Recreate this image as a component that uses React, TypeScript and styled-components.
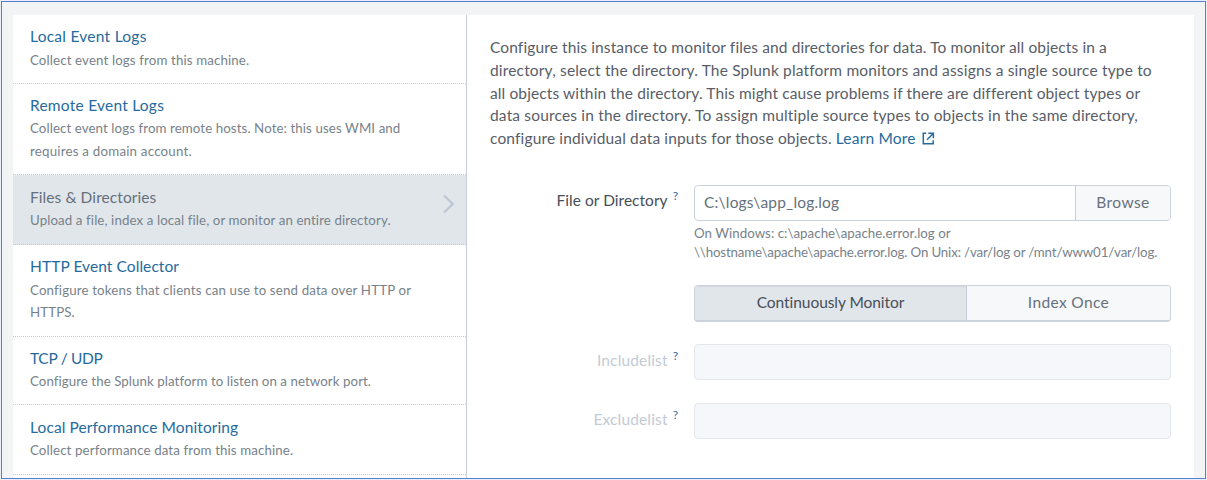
import React from "react";
import styled, { createGlobalStyle } from "styled-components";

const GlobalStyle = createGlobalStyle`
  * { box-sizing: border-box; }
  body {
    margin: 0;
    background: #e9eff9;
    font-family: Lato, "Open Sans", sans-serif;
    font-variant-ligatures: none;
    overflow: hidden;
  }
`;

const Frame = styled.div`
  width: 1205px;
  height: 478px;
  margin: 1px;
  border: 1px solid #5580cb;
  background: #f2f4f5;
  padding: 13px 11px 0;
  display: flex;
  overflow: hidden;
`;

const Panel = styled.div`
  display: flex;
  width: 1181px;
  height: 463px;
  background: #fff;
  overflow: hidden;
`;

const Sidebar = styled.nav`
  flex: none;
  width: 454px;
  height: 464px;
  border-right: 1px solid #c8cede;
  display: flex;
  flex-direction: column;
`;

const Item = styled.div<{ $height: number; $selected?: boolean }>`
  flex: none;
  display: flex;
  align-items: center;
  height: ${(p) => p.$height}px;
  padding: 0 11px 0 17px;
  border-bottom: 1px dotted #c3cbd4;
  background: ${(p) => (p.$selected ? "#e1e6eb" : "#fff")};
`;

const ItemText = styled.div<{ $top: number }>`
  flex: 1;
  align-self: flex-start;
  padding-top: ${(p) => p.$top}px;
`;

const Line = styled.div<{ $track?: number }>`
  white-space: pre;
  letter-spacing: ${(p) => p.$track ?? 0}px;
`;

const ItemTitle = styled(Line)<{ $selected?: boolean }>`
  font-size: 15.5px;
  line-height: 23px;
  color: ${(p) => (p.$selected ? "#66707b" : "#266a9d")};
`;

const ItemDescriptions = styled.div<{ $offset: number }>`
  padding-top: ${(p) => p.$offset}px;
`;

const ItemDescription = styled(Line)<{ $leading: number }>`
  font-size: 13.3px;
  line-height: ${(p) => p.$leading}px;
  color: #77828a;
`;

const Chevron = styled.svg`
  flex: none;
  display: block;
  margin-top: -12px;
`;

const Content = styled.main`
  flex: 1;
  padding: 21px 23px 0;
`;

const Intro = styled.div`
  font-size: 15.5px;
  line-height: 22.8px;
  color: #585d68;
`;

const IntroLast = styled.div`
  display: flex;
`;

const LearnMore = styled.a`
  display: flex;
  align-items: center;
  color: #266a9d;
  letter-spacing: 0.2px;
  margin-left: 4px;
`;

const ExternalIcon = styled.svg`
  display: block;
  margin: -1px 0 0 6px;
`;

const Form = styled.div`
  margin-top: 35px;
`;

const FormRow = styled.div<{ $gap: number }>`
  display: flex;
  align-items: flex-start;
  margin-bottom: ${(p) => p.$gap}px;
`;

const Label = styled.label<{ $track: number; $disabled?: boolean }>`
  flex: none;
  display: flex;
  justify-content: flex-end;
  width: 188px;
  padding-top: ${(p) => (p.$disabled ? 5 : 4)}px;
  margin-right: 16px;
  font-size: 15.5px;
  line-height: 23px;
  letter-spacing: ${(p) => p.$track}px;
  color: ${(p) => (p.$disabled ? "#c3cbd4" : "#474e58")};
`;

const Help = styled.span`
  margin-left: 5px;
  font-size: 12px;
  line-height: 13px;
  letter-spacing: 0;
  color: #2f6c9f;
`;

const Field = styled.div`
  width: 477px;
`;

const Group = styled.div`
  display: flex;
  height: 37px;
  border: 1px solid #ccd2dc;
  border-bottom-width: 2px;
  border-radius: 4px;
  overflow: hidden;
`;

const InputGroup = styled(Group)`
  height: 36px;
  border-bottom-width: 1px;
`;

const Value = styled.div`
  flex: 1;
  padding-left: 9px;
  font-size: 15.5px;
  line-height: 33px;
  letter-spacing: 0.19px;
  color: #66707b;
`;

const Button = styled.div<{ $width: number; $track: number; $active?: boolean; $divided?: boolean }>`
  flex: none;
  width: ${(p) => p.$width}px;
  border-left: ${(p) => (p.$divided ? "1px solid #c6cdd6" : "none")};
  background: ${(p) => (p.$active ? "#e1e6eb" : "#f7f8fa")};
  box-shadow: ${(p) => (p.$active ? "inset 0 1px 1px #d3d9e0" : "none")};
  color: ${(p) => (p.$active ? "#474e58" : "#66707b")};
  font-size: 15.5px;
  line-height: 32px;
  letter-spacing: ${(p) => p.$track}px;
  text-align: center;
`;

const Hint = styled.div`
  padding-top: 3px;
  font-size: 13.3px;
  line-height: 19.5px;
  color: #77828a;
`;

const DisabledInput = styled.div`
  height: 36px;
  border: 1px solid #e3e7ec;
  border-radius: 4px;
  background: #f6f7fa;
`;

type Entry = {
  title: string;
  track: number;
  height: number;
  top: number;
  offset: number;
  leading: number;
  selected?: boolean;
  lines: [string, number][];
};

const entries: Entry[] = [
  {
    title: "Local Event Logs",
    track: 0.26,
    height: 69,
    top: 10,
    offset: 1,
    leading: 23,
    lines: [["Collect event logs from this machine.", 0.125]],
  },
  {
    title: "Remote Event Logs",
    track: 0.24,
    height: 91,
    top: 10,
    offset: 0,
    leading: 23.4,
    lines: [
      ["Collect event logs from remote hosts. Note: this uses WMI and", 0.085],
      ["requires a domain account.", 0.218],
    ],
  },
  {
    title: "Files & Directories",
    track: 0.08,
    height: 70,
    top: 11,
    offset: 0,
    leading: 23,
    selected: true,
    lines: [["Upload a file, index a local file, or monitor an entire directory.", 0.1]],
  },
  {
    title: "HTTP Event Collector",
    track: 0.08,
    height: 92,
    top: 10,
    offset: 1,
    leading: 22,
    lines: [
      ["Configure tokens that clients can use to send data over HTTP or", 0.145],
      ["HTTPS.", 0.1],
    ],
  },
  {
    title: "TCP / UDP",
    track: -0.306,
    height: 68,
    top: 10,
    offset: 0,
    leading: 23,
    lines: [["Configure the Splunk platform to listen on a network port.", 0.06]],
  },
  {
    title: "Local Performance Monitoring",
    track: 0.1,
    height: 70,
    top: 11,
    offset: 0,
    leading: 23,
    lines: [["Collect performance data from this machine.", 0.114]],
  },
];

const intro: [string, number][] = [
  ["Configure this instance to monitor files and directories for data. To monitor all objects in a", 0.12],
  ["directory, select the directory. The Splunk platform monitors and assigns a single source type to", 0.17],
  ["all objects within the directory. This might cause problems if there are different object types or", 0.116],
  ["data sources in the directory. To assign multiple source types to objects in the same directory,", 0.172],
];

export default function App() {
  return (
    <>
      <GlobalStyle />
      <Frame>
        <Panel>
          <Sidebar>
            {entries.map((e) => (
              <Item key={e.title} $height={e.height} $selected={e.selected}>
                <ItemText $top={e.top}>
                  <ItemTitle $track={e.track} $selected={e.selected}>{e.title}</ItemTitle>
                  <ItemDescriptions $offset={e.offset}>
                    {e.lines.map(([text, track]) => (
                      <ItemDescription key={text} $track={track} $leading={e.leading}>{text}</ItemDescription>
                    ))}
                  </ItemDescriptions>
                </ItemText>
                {e.selected && (
                  <Chevron width="13" height="20" viewBox="0 0 13 20" fill="none" stroke="#bcc5d3" strokeWidth="2.2">
                    <path d="M2 1.5 L10.8 10 L2 18.5" />
                  </Chevron>
                )}
              </Item>
            ))}
          </Sidebar>
          <Content>
            <Intro>
              {intro.map(([text, track]) => (
                <Line key={text} $track={track}>{text}</Line>
              ))}
              <IntroLast>
                <Line $track={0.146}>configure individual data inputs for those objects.</Line>
                <LearnMore>
                  Learn More
                  <ExternalIcon width="13" height="13" viewBox="0 0 13 13" fill="none" stroke="#266a9d" strokeWidth="1.5">
                    <path d="M4.2 1.3 H1.3 V11.7 H11.2 V8.3" />
                    <path d="M6.3 1.3 H11.4 V6.2 M11.2 1.5 L5 7.7" />
                  </ExternalIcon>
                </LearnMore>
              </IntroLast>
            </Intro>
            <Form>
              <FormRow $gap={22}>
                <Label $track={0.03}>File or Directory<Help>?</Help></Label>
                <Field>
                  <InputGroup>
                    <Value>C:\logs\app_log.log</Value>
                    <Button $width={95} $track={0.42} $divided>Browse</Button>
                  </InputGroup>
                  <Hint>
                    <Line $track={0.036}>{"On Windows: c:\\apache\\apache.error.log or"}</Line>
                    <Line $track={-0.152}>
                      {"\\\\hostname\\apache\\apache.error.log. On Unix: /var/log or /mnt/www01/var/log."}
                    </Line>
                  </Hint>
                </Field>
              </FormRow>
              <FormRow $gap={22}>
                <Label $track={0} />
                <Field>
                  <Group>
                    <Button $width={271} $track={-0.06} $active>Continuously Monitor</Button>
                    <Button $width={204} $track={0.36} $divided>Index Once</Button>
                  </Group>
                </Field>
              </FormRow>
              <FormRow $gap={23}>
                <Label $track={0.147} $disabled>Includelist<Help>?</Help></Label>
                <Field><DisabledInput /></Field>
              </FormRow>
              <FormRow $gap={0}>
                <Label $track={0.152} $disabled>Excludelist<Help>?</Help></Label>
                <Field><DisabledInput /></Field>
              </FormRow>
            </Form>
          </Content>
        </Panel>
      </Frame>
    </>
  );
}
